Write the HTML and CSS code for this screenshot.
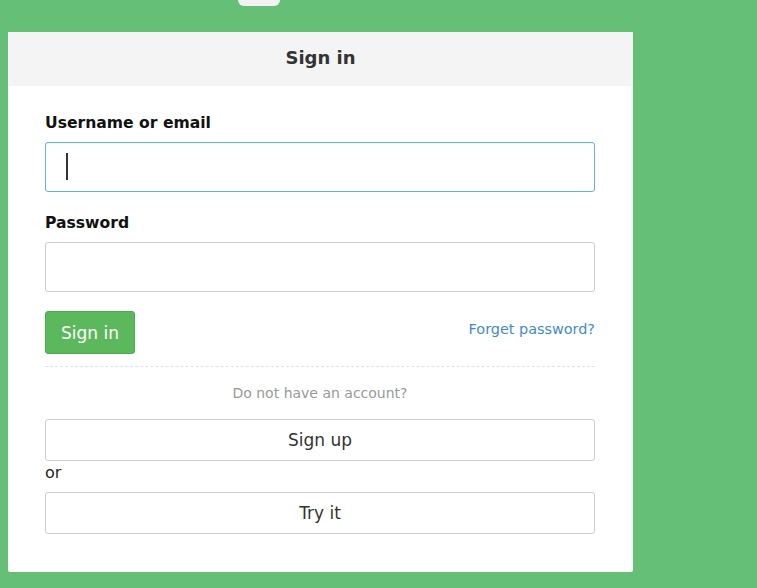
FILE: index.html
```html
<!DOCTYPE html>
<html lang="en">
<head>
    <meta charset="UTF-8">
    <meta name="viewport" content="width=device-width, initial-scale=1.0">
    <title>Sign in</title>
    <link rel="stylesheet" href="styles.css">
</head>
<body>
    <div class="top-tab"></div>

    <div class="login-box">
        <div class="login-header">Sign in</div>
        <form class="login-body" onsubmit="return false">
            <div class="form-group">
                <label for="username">Username or email</label>
                <div class="input-wrap">
                    <input type="text" id="username" class="focused">
                    <span class="caret"></span>
                </div>
            </div>
            <div class="form-group">
                <label for="password">Password</label>
                <input type="password" id="password">
            </div>
            <div class="actions">
                <button type="submit" class="btn-primary">Sign in</button>
                <a href="#" class="forget">Forget password?</a>
            </div>
            <div class="divider"></div>
            <p class="hint">Do not have an account?</p>
            <button type="button" class="btn-default">Sign up</button>
            <div class="or">or</div>
            <button type="button" class="btn-default">Try it</button>
        </form>
    </div>
</body>
</html>
```

FILE: styles.css
```css
body {
    font-family: 'DejaVu Sans', Verdana, sans-serif;
    background: #65bf77;
    margin: 0;
    padding: 32px 8px;
    color: #333;
}
.top-tab {
    position: absolute;
    top: -10px;
    left: 238px;
    width: 42px;
    height: 16px;
    background: #f2f2f2;
    border-radius: 6px;
}
.login-box {
    width: 625px;
    height: 540px;
    background: #fff;
    border-radius: 2px;
}
.login-header {
    background: #f4f4f4;
    height: 54px;
    line-height: 52px;
    text-align: center;
    font-size: 18px;
    font-weight: bold;
    color: #333;
}
.login-body {
    padding: 27px 38px 0 37px;
}
.form-group {
    margin-bottom: 21px;
}
label {
    display: block;
    font-size: 15.6px;
    font-weight: bold;
    color: #111;
    margin-bottom: 9px;
    line-height: 20px;
}
.input-wrap {
    position: relative;
}
.caret {
    position: absolute;
    left: 21px;
    top: 11px;
    width: 2px;
    height: 27px;
    background: #333;
}
input {
    display: block;
    box-sizing: border-box;
    width: 100%;
    height: 50px;
    padding: 6px 20px;
    border: 1px solid #ccc;
    border-radius: 3px;
    font-family: inherit;
    font-size: 24px;
    color: #333;
    outline: none;
}
input.focused {
    border-color: #66afe9;
    box-shadow: inset 0 1px 1px rgba(0, 0, 0, 0.04);
}
.actions {
    display: flex;
    justify-content: space-between;
    align-items: center;
    margin-top: -2px;
}
button {
    font-family: inherit;
    font-size: 17px;
    border-radius: 3px;
    cursor: pointer;
}
.btn-primary {
    background: #5cb85c;
    border: 1px solid #4cae4c;
    color: #fff;
    height: 43px;
    padding: 0 15px;
}
.forget {
    color: #428bca;
    font-size: 14.4px;
    text-decoration: none;
    padding-bottom: 7px;
}
.divider {
    border-top: 1px dashed #e2e2e2;
    margin: 12px 0 0;
}
.hint {
    text-align: center;
    color: #999;
    font-size: 14px;
    margin: 16px 0 16px;
    line-height: 20px;
}
.btn-default {
    display: block;
    width: 100%;
    height: 42px;
    background: #fff;
    border: 1px solid #ccc;
    color: #333;
}
.or {
    font-size: 16px;
    color: #222;
    line-height: 22px;
    margin: 1px 0 8px;
}
```
